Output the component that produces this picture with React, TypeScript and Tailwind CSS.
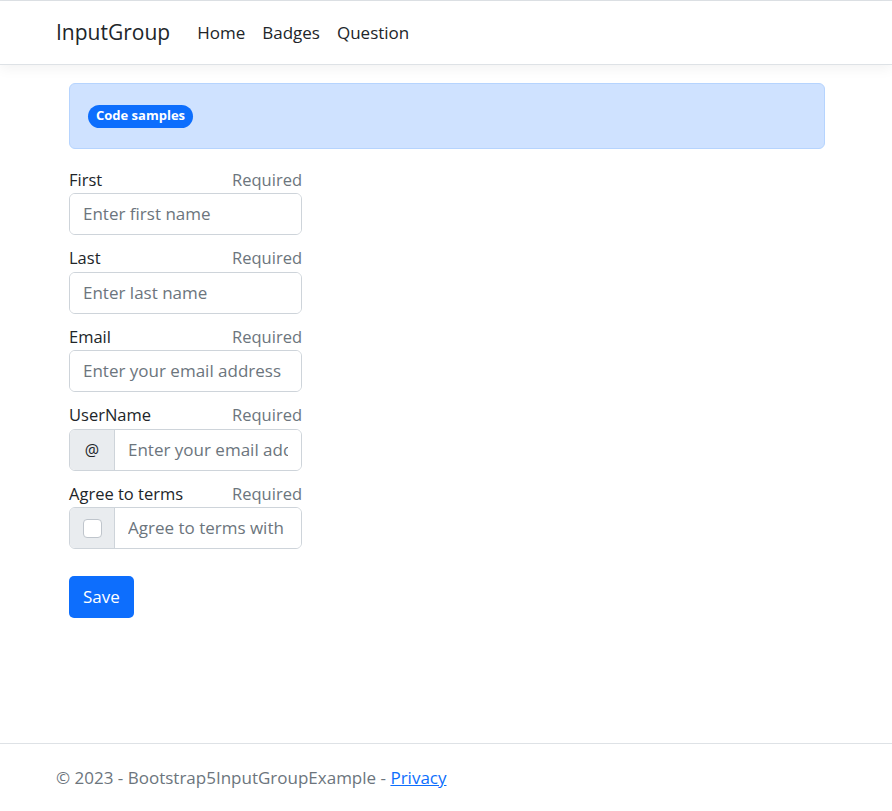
export default function App() {
  const fields = [
    { label: "First", placeholder: "Enter first name", addon: null },
    { label: "Last", placeholder: "Enter last name", addon: null },
    { label: "Email", placeholder: "Enter your email address", addon: null },
    { label: "UserName", placeholder: "Enter your email address", addon: "at" },
    { label: "Agree to terms", placeholder: "Agree to terms with checkbox", addon: "check" },
  ] as { label: string; placeholder: string; addon: null | "at" | "check" }[];

  return (
    <div
      className="min-h-[811px] flex flex-col bg-white text-[#212529]"
      style={{ fontFamily: '"Open Sans", "Liberation Sans", sans-serif' }}
    >
      {/* Navbar */}
      <header className="border-t border-[#dee2e6]">
        <nav className="h-[64px] flex items-center px-[56px] border-b border-[#dee2e6] bg-white shadow-[0_4px_12px_rgba(0,0,0,0.05)]">
          <span className="text-[21px] mr-[27px] text-[#212529]">InputGroup</span>
          <div className="flex items-center gap-[17px] text-[17px] text-[#212529]">
            <a>Home</a>
            <a>Badges</a>
            <a>Question</a>
          </div>
        </nav>
      </header>

      {/* Main */}
      <main className="flex-1 pl-[69px] pr-[67px] pt-[18px]">
        <div className="h-[66px] rounded-[6px] border border-[#b6d4fe] bg-[#cfe2ff] flex items-center pl-[18px]">
          <span className="h-[23px] px-[8px] rounded-full bg-[#0d6efd] text-white text-[13px] font-bold flex items-center">
            Code samples
          </span>
        </div>

        <form className="w-[233px] mt-[19px] flex flex-col gap-[11.5px]">
          {fields.map((f) => (
            <div key={f.label} className="flex flex-col">
              <div className="flex justify-between h-[24px] items-center text-[16.5px]">
                <span>{f.label}</span>
                <span className="text-[#6c757d]">Required</span>
              </div>
              <div className="flex h-[42px] mt-[1px] rounded-[6px] border border-[#ced4da] overflow-hidden">
                {f.addon && (
                  <div className="w-[45px] shrink-0 bg-[#e9ecef] border-r border-[#ced4da] flex items-center justify-center text-[16px]">
                    {f.addon === "at" ? (
                      "@"
                    ) : (
                      <span className="w-[19px] h-[19px] rounded-[4px] border border-[#bfc5cc] bg-white" />
                    )}
                  </div>
                )}
                <input
                  className="min-w-0 flex-1 px-[13px] text-[17px] outline-none placeholder:text-[#6c757d] bg-white"
                  placeholder={f.placeholder}
                />
              </div>
            </div>
          ))}
          <div className="pt-[15px]">
            <button
              type="button"
              className="h-[42px] px-[14px] rounded-[5px] bg-[#0d6efd] text-white text-[17px]"
            >
              Save
            </button>
          </div>
        </form>
      </main>

      {/* Footer */}
      <footer className="border-t border-[#dee2e6] h-[68px] flex items-center px-[56px] text-[17px] text-[#6c757d]">
        <span>
          © 2023 - Bootstrap5InputGroupExample -{" "}
          <a className="text-[#0d6efd] underline">Privacy</a>
        </span>
      </footer>
    </div>
  );
}
